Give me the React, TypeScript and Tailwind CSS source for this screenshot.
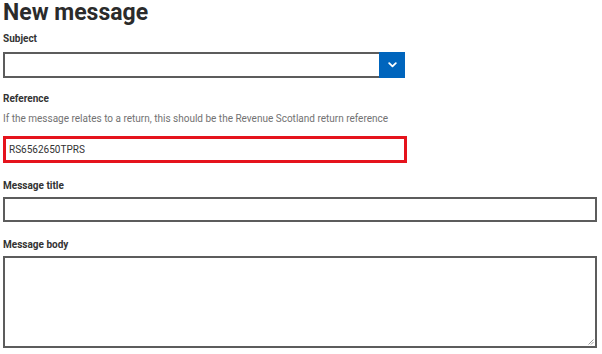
import React from 'react';

const App: React.FC = () => {
  return (
    <div className="min-h-screen bg-white pl-[3px] pr-[5px] text-[#333333]" style={{ fontFamily: 'Roboto, "Liberation Sans", sans-serif' }}>
      <h1 className="text-[23px] leading-[23px] pt-[1px] font-bold text-[#2b2b2b]">New message</h1>

      {/* Subject */}
      <label className="block mt-[9px] text-[10px] leading-[12px] font-bold">Subject</label>
      <div className="mt-[7px] flex w-[402px] h-[26px] border-2 border-[#5c5c5c] border-r-0 bg-white">
        <div className="flex-1" />
        <div className="w-[26px] -my-[2px] h-[26px] bg-[#0065bd] flex items-center justify-center">
          <svg width="9" height="6" viewBox="0 0 9 6" fill="none">
            <path d="M1.2 1.2 L4.5 4.4 L7.8 1.2" stroke="white" strokeWidth="1.8" strokeLinecap="round" strokeLinejoin="round" />
          </svg>
        </div>
      </div>

      {/* Reference */}
      <label className="block mt-[15px] text-[10px] leading-[12px] font-bold">Reference</label>
      <p className="mt-[8px] text-[10px] leading-[12px] text-[#727272]">
        If the message relates to a return, this should be the Revenue Scotland return reference
      </p>
      <div className="mt-[11px] w-[404px] h-[27px] border-[3px] border-[#e5131c] flex items-center px-[3px] text-[10px] text-[#333333]">
        RS6562650TPRS
      </div>

      {/* Message title */}
      <label className="block mt-[17px] text-[10px] leading-[12px] font-bold">Message title</label>
      <div className="mt-[5px] w-[594px] h-[25px] border-2 border-[#5c5c5c]" />

      {/* Message body */}
      <label className="block mt-[17px] text-[10px] leading-[12px] font-bold">Message body</label>
      <div className="relative mt-[5px] w-[594px] h-[92px] border-2 border-[#5c5c5c]">
        <svg className="absolute right-[1px] bottom-[1px]" width="6" height="6" viewBox="0 0 6 6">
          <path d="M5.5 0.5 L0.5 5.5 M5.5 3 L3 5.5" stroke="#9a9a9a" strokeWidth="1" />
        </svg>
      </div>
    </div>
  );
};

export default App;
